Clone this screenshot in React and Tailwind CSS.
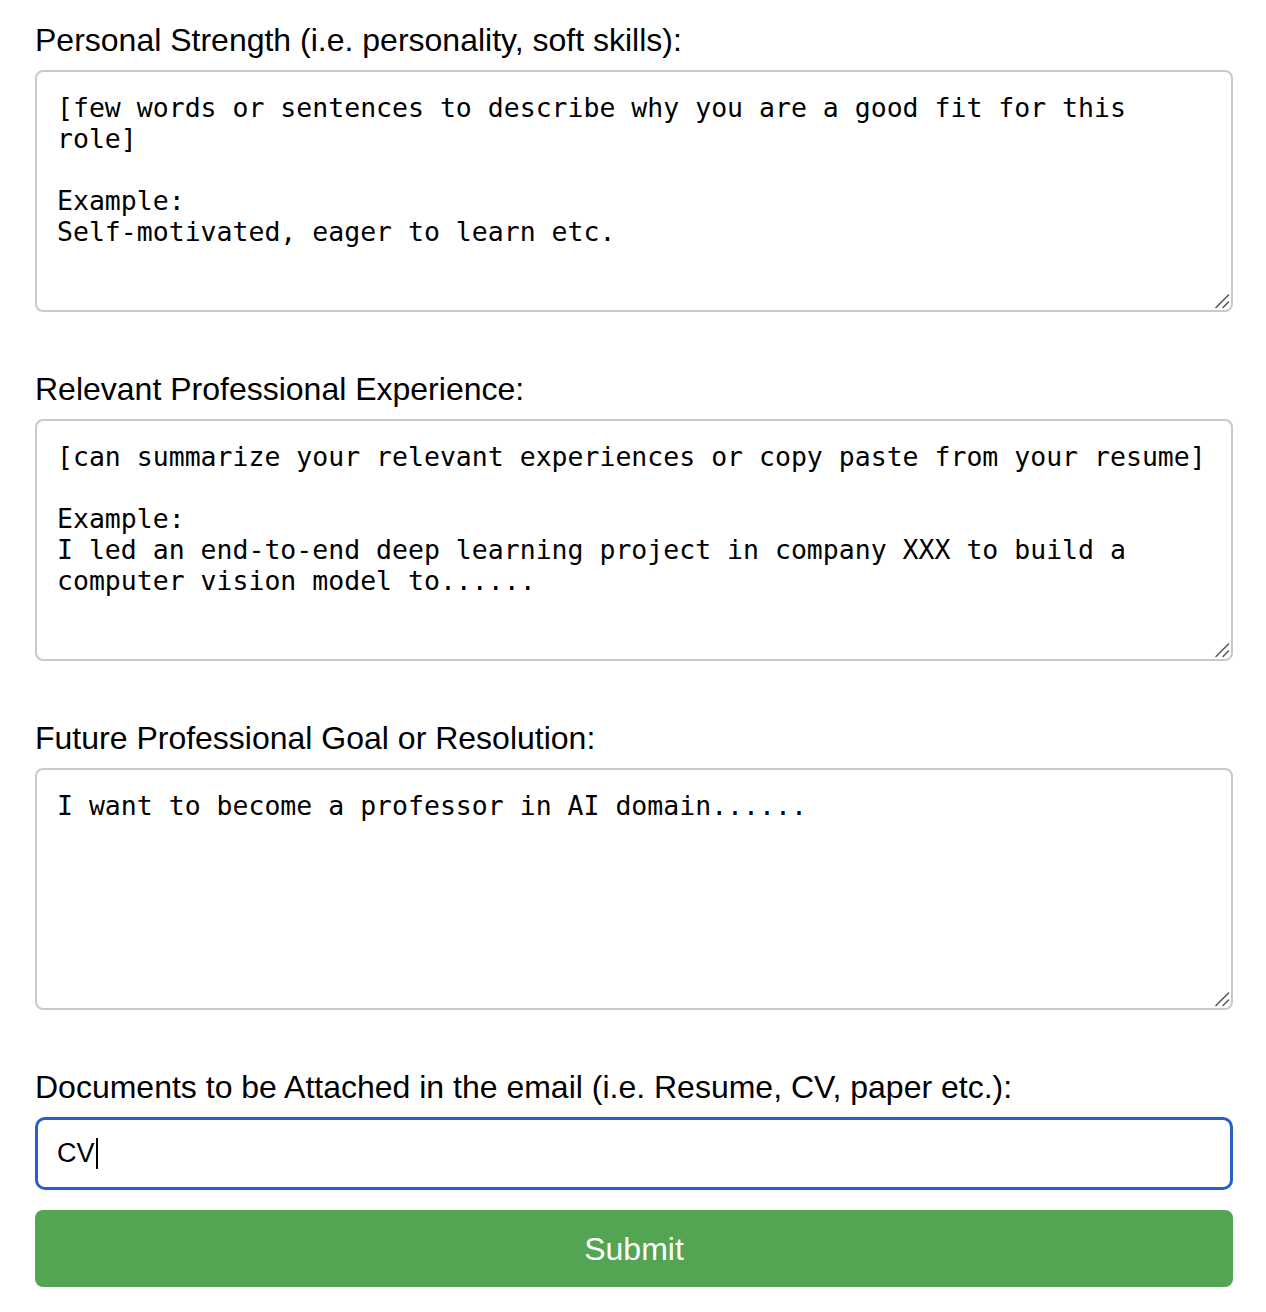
import React from "react";

const Grip = () => (
  <svg
    className="pointer-events-none absolute right-[3px] bottom-[3px]"
    width="16"
    height="16"
    viewBox="0 0 16 16"
  >
    <line x1="2" y1="14.5" x2="14.5" y2="2" stroke="#5a5a5a" strokeWidth="1.6" strokeLinecap="round" />
    <line x1="9" y1="14.5" x2="14.5" y2="9" stroke="#5a5a5a" strokeWidth="1.6" strokeLinecap="round" />
  </svg>
);

const Area = ({ value }) => (
  <div className="relative">
    <textarea
      defaultValue={value}
      spellCheck={false}
      className="block h-[242px] w-full resize-none rounded-[8px] border-2 border-[#c9c9c9] bg-white pt-[20px] pr-[14px] pb-[20px] pl-[20px] text-[26.5px] leading-[31px] text-black outline-none"
      style={{ fontFamily: '"DejaVu Sans Mono", "Liberation Mono", monospace' }}
    />
    <Grip />
  </div>
);

const Label = ({ children }) => (
  <div className="mb-[11px] text-[32px] leading-[37px] text-black">{children}</div>
);

export default function App() {
  return (
    <div
      className="min-h-[1312px] w-[1266px] bg-white pt-[22px] pl-[35px]"
      style={{ fontFamily: '"Liberation Sans", Arial, sans-serif' }}
    >
      <div className="flex w-[1198px] flex-col">
        <Label>Personal Strength (i.e. personality, soft skills):</Label>
        <Area
          value={
            "[few words or sentences to describe why you are a good fit for this role]\n\nExample:\nSelf-motivated, eager to learn etc."
          }
        />
        <div className="h-[59px]" />
        <Label>Relevant Professional Experience:</Label>
        <Area
          value={
            "[can summarize your relevant experiences or copy paste from your resume]\n\nExample:\nI led an end-to-end deep learning project in company XXX to build a computer vision model to......"
          }
        />
        <div className="h-[59px]" />
        <Label>Future Professional Goal or Resolution:</Label>
        <Area value={"I want to become a professor in AI domain......"} />
        <div className="h-[59px]" />
        <Label>Documents to be Attached in the email (i.e. Resume, CV, paper etc.):</Label>
        <div className="flex h-[73px] items-center rounded-[10px] border-[3px] border-[#2b5fc8] bg-white pl-[19px] text-[27px] text-black">
          <span>CV</span>
          <span className="ml-[1px] inline-block h-[31px] w-[2px] bg-black" />
        </div>
        <button className="mt-[20px] flex h-[77px] w-full items-center justify-center rounded-[8px] bg-[#54a553] text-[32px] text-white">
          Submit
        </button>
      </div>
    </div>
  );
}
